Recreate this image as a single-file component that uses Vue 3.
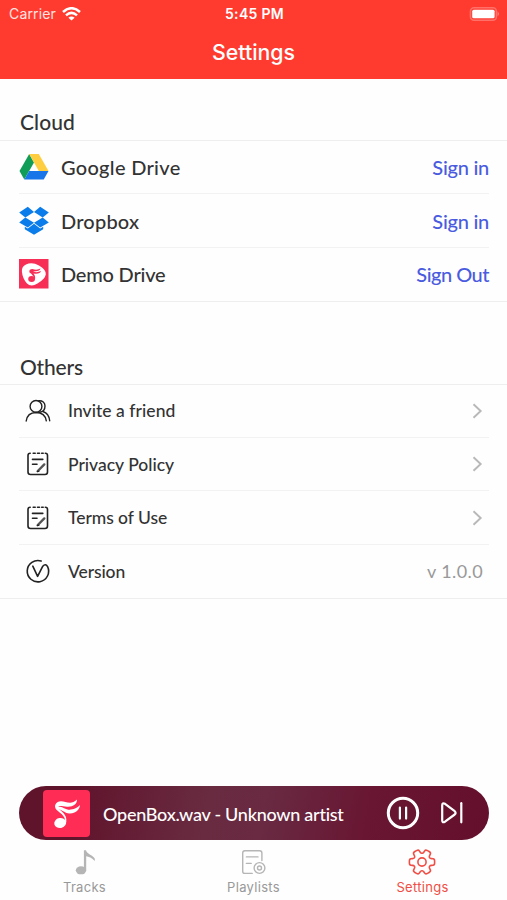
<script setup>
    import { ref, computed } from 'vue';

    const drives = ref([
        { id: 'google', name: 'Google Drive', action: 'Sign in', spacing: 0.3, actionSpacing: -0.25 },
        { id: 'dropbox', name: 'Dropbox', action: 'Sign in', spacing: 0.2, actionSpacing: -0.25 },
        { id: 'demo', name: 'Demo Drive', action: 'Sign Out', spacing: -0.2, actionSpacing: -0.5 }
    ])

    const others = ref([
        { id: 'invite', name: 'Invite a friend', icon: 'friend', spacing: 0.05 },
        { id: 'privacy', name: 'Privacy Policy', icon: 'doc', spacing: 0 },
        { id: 'terms', name: 'Terms of Use', icon: 'doc', spacing: -0.05 },
        { id: 'version', name: 'Version', icon: 'version', spacing: -0.1, value: 'v 1.0.0' }
    ])

    const tabs = ref(['Tracks', 'Playlists', 'Settings'])
    const active = ref('Settings')

    // six rounded teeth around the centre
    const gear = computed(() => {
        const pts = []
        for (let k = 0; k < 6; k++) {
            const shape = [[-23, 8.8], [-14, 13], [14, 13], [23, 8.8]]
            shape.forEach(([deg, r]) => {
                const a = (k * 60 + deg) * Math.PI / 180
                pts.push([14 + r * Math.cos(a), 14 + r * Math.sin(a)])
            })
        }
        const mix = (a, b, t) => [a[0] + (b[0] - a[0]) * t, a[1] + (b[1] - a[1]) * t]
        let d = ''
        pts.forEach((p, i) => {
            const prev = pts[(i + pts.length - 1) % pts.length]
            const next = pts[(i + 1) % pts.length]
            const a = mix(p, prev, 0.35)
            const b = mix(p, next, 0.35)
            d += (i ? 'L' : 'M') + a[0].toFixed(2) + ' ' + a[1].toFixed(2)
            d += 'Q' + p[0].toFixed(2) + ' ' + p[1].toFixed(2) + ' ' + b[0].toFixed(2) + ' ' + b[1].toFixed(2)
        })
        return d + 'Z'
    })
</script>
<template>
    <div class="screen">
        <header>
            <div class="status">
                <div class="carrier">
                    <span>Carrier</span>
                    <svg width="19" height="14" viewBox="0 0 19 14" fill="none" stroke="#fff" stroke-width="2.5">
                        <path d="M1 5Q9.5-2.6 18 5" />
                        <path d="M4 8.4Q9.5 3.4 15 8.4" />
                        <path d="M9.5 13.6L6.4 10.8Q9.5 8 12.6 10.8Z" fill="#fff" stroke="none" />
                    </svg>
                </div>
                <div class="clock">5:45 PM</div>
                <svg class="battery" width="31" height="14" viewBox="0 0 31 14">
                    <rect x="1.5" y=".8" width="25.9" height="12.4" rx="3.5" fill="none" stroke="#ff7068" stroke-width="1.6" />
                    <rect x="3.2" y="2.7" width="22.4" height="8.6" rx="1.6" fill="#fff" />
                    <path d="M28.7 4.6Q31 7 28.7 9.2Z" fill="#ff8f87" />
                </svg>
            </div>
            <h1>Settings</h1>
        </header>

        <main>
            <h2 class="cloud">Cloud</h2>
            <ul>
                <li v-for="item in drives" :key="item.id" class="drive">
                    <svg v-if="item.id == 'google'" width="30" height="30" viewBox="0 0 30 30">
                        <path d="M10.2 2L.5 19L5.3 27.5L15 10.5Z" fill="#0f9d58" />
                        <path d="M10.2 2H19.8L29.5 19H19.8Z" fill="#ffcd40" />
                        <path d="M10.2 19H29.5L24.7 27.5H5.3Z" fill="#1976e8" />
                    </svg>
                    <svg v-else-if="item.id == 'dropbox'" width="30" height="30" viewBox="0 0 30 30" fill="#0a7dea">
                        <path d="M8.8 .8L15 6L6.3 11.4L.2 6.5Z" />
                        <path d="M21.2 .8L15 6L23.7 11.4L29.8 6.5Z" />
                        <path d="M6.3 11.4L15 16.8L8.8 21.6L.2 16.4Z" />
                        <path d="M23.7 11.4L15 16.8L21.2 21.6L29.8 16.4Z" />
                        <path d="M15 17.7L21.2 22.6L24.2 20.8V23.2L15 28.8L5.8 23.2V20.8L8.8 22.6Z" />
                    </svg>
                    <svg v-else width="30" height="30" viewBox="0 0 30 30">
                        <rect x="0" y="0" width="29.5" height="29.5" fill="#f72f57" />
                        <path d="M7 5.5Q13 2.5 20 6.5Q27.5 11 26.8 15.5Q26 20 18.5 24.5Q12 28.5 8 24.5Q3.5 19.5 2.9 12.5Q2.5 7.5 7 5.5Z" fill="#fff" />
                        <ellipse cx="12.6" cy="20" rx="3.4" ry="2.9" fill="#f72f57" />
                        <path d="M15.3 20Q14.5 16 10.5 13.5Q9.5 10 13.5 10Q18 11.5 21.5 9.5Q21 12.5 14 12.5Q18 14 22 12Q21 15.5 14.5 14.5Q17 17.5 15.8 21Z" fill="#f72f57" />
                    </svg>
                    <span class="name" :style="{ letterSpacing: item.spacing + 'px' }">{{ item.name }}</span>
                    <a :style="{ letterSpacing: item.actionSpacing + 'px' }">{{ item.action }}</a>
                </li>
            </ul>

            <h2 class="other">Others</h2>
            <ul>
                <li v-for="item in others" :key="item.id" class="option">
                    <svg v-if="item.icon == 'friend'" width="26" height="26" viewBox="0 0 26 26" fill="none" stroke="#222" stroke-width="1.4" stroke-linecap="round">
                        <circle cx="11" cy="8.4" r="5.9" />
                        <path d="M13.8 2.8C17.5 2.5 20 4.8 20 8C20 11.8 17.6 14 14.5 14.3" />
                        <path d="M1.2 23C2 17.4 5.5 14.6 11 14.5C16.8 14.6 20.5 17.6 21.3 22.8" />
                        <path d="M18 13.5C22 14.8 24.3 18.3 24.7 22.8" />
                    </svg>
                    <svg v-else-if="item.icon == 'doc'" width="26" height="26" viewBox="0 0 26 26" fill="none" stroke="#222" stroke-width="1.6" stroke-linecap="round">
                        <path d="M5.2 2.2Q3 2.2 3 4.4V21Q3 23.5 5.5 23.5H20Q22.5 23.5 22.5 21V4.4Q22.5 2.2 20.3 2.2" />
                        <path d="M8.2 2.2H10.2M12.5 2.2H14.5M16.7 2.2H18.2M7.5 8.4H17.8M7.5 13.3H12" />
                        <path d="M12.8 20L19.3 13.4" stroke="#555" stroke-width="2.4" />
                        <path d="M12.2 20.6L14 20.1" stroke-width="1.2" />
                    </svg>
                    <svg v-else width="26" height="26" viewBox="0 0 26 26" fill="none" stroke="#222" stroke-width="1.6" stroke-linecap="round" stroke-linejoin="round">
                        <path d="M16.2 3A10.7 10.7 0 1 0 22.6 8.6Q20.5 5.2 17.8 8.2L12.6 18.4L7.8 8.2" />
                    </svg>
                    <span class="name" :style="{ letterSpacing: item.spacing + 'px' }">{{ item.name }}</span>
                    <span v-if="item.value" class="value">{{ item.value }}</span>
                    <svg v-else width="12" height="18" viewBox="0 0 12 18" fill="none" stroke="#b8b8b8" stroke-width="1.9">
                        <path d="M2.5 2.2L9.7 9L2.5 15.8" />
                    </svg>
                </li>
            </ul>
        </main>

        <footer>
            <div class="player">
                <div class="cover">
                    <svg width="47" height="47" viewBox="0 0 47 47" fill="#fff">
                        <ellipse cx="17.2" cy="33" rx="6" ry="5" transform="rotate(-12 17.2 33)" />
                        <path d="M21.8 34C23.7 27 18.5 24 13.7 20C10 16 13 11.3 18 11.2C22.5 11.1 28 15.5 34 9.6C34.2 14.3 29.6 17.2 24 16.7C20 16.3 17 15.4 15.2 16.4C20 16.5 23 20.2 28 19.6C32 19.2 34.5 17.5 37 15C36.6 20 32 24 26.2 23.5C22.5 23.2 19 20 15.7 18.9C20.3 22.2 25.2 26.3 22.8 34Z" />
                    </svg>
                </div>
                <div class="song">OpenBox.wav - Unknown artist</div>
                <svg class="pause" width="34" height="34" viewBox="0 0 34 34" fill="none" stroke="#fff">
                    <circle cx="17" cy="17" r="14.7" stroke-width="3" />
                    <path d="M13.9 11.6V22.6M20.1 11.6V22.6" stroke-width="2.2" stroke-linecap="round" />
                </svg>
                <svg width="24" height="24" viewBox="0 0 24 24" fill="none" stroke="#fff" stroke-width="2.2" stroke-linejoin="round" stroke-linecap="round">
                    <path d="M2.2 4.4Q2.2 1.4 5 2.8L14.7 10.2Q16.5 12 14.7 13.5L5 20.7Q2.2 22.3 2.2 19.3Z" />
                    <path d="M21.3 2.2V21.3" />
                </svg>
            </div>
            <nav>
                <div v-for="tab in tabs" :key="tab" class="tab" :class="{ active: tab == active }" @click="active = tab">
                    <svg v-if="tab == 'Tracks'" width="28" height="28" viewBox="0 0 28 28">
                        <ellipse cx="11" cy="22.3" rx="5.2" ry="4" fill="currentColor" />
                        <path d="M13.9 22V2.3H16C16.9 6.5 23.3 7 24.8 10.8V13C21.9 9.6 18.7 8.7 16.2 8.2V22Z" fill="currentColor" />
                    </svg>
                    <svg v-else-if="tab == 'Playlists'" width="28" height="28" viewBox="0 0 28 28" fill="none" stroke="currentColor" stroke-width="1.4" stroke-linecap="round">
                        <path d="M13.2 25.4H5.9Q3.7 25.4 3.7 23.2V5Q3.7 2.8 5.9 2.8H20.7Q22.9 2.8 22.9 5V12.5" />
                        <path d="M7.4 8.9H19M7.4 15.4H12.2" />
                        <circle cx="20.5" cy="20" r="5.4" />
                        <circle cx="20.5" cy="20" r="2" />
                    </svg>
                    <svg v-else width="28" height="28" viewBox="0 0 28 28" fill="none" stroke="currentColor" stroke-width="1.6">
                        <path :d="gear" />
                        <circle cx="14" cy="14" r="4.1" />
                    </svg>
                    <span>{{ tab }}</span>
                </div>
            </nav>
        </footer>
    </div>
</template>
<style>
    body{
        margin: 0;
        background-color: #fff;
    }
</style>
<style scoped>
    .screen{
        display: flex;
        flex-direction: column;
        width: 507px;
        height: 900px;
        overflow: hidden;
        background-color: #fefefe;
        font-family: Lato, "Liberation Sans", sans-serif;
        color: #333;
    }
    header{
        box-sizing: border-box;
        height: 79px;
        background-color: #ff3b30;
        color: #fff;
        font-family: Inter, "Liberation Sans", sans-serif;
    }
    .status{
        display: grid;
        grid-template-columns: 1fr auto 1fr;
        align-items: center;
        height: 27px;
        padding: 0 7px 0 9px;
        font-size: 14px;
    }
    .carrier{
        display: flex;
        align-items: center;
        gap: 6px;
        color: #ffe3e1;
        letter-spacing: .15px;
    }
    .clock{
        font-weight: 600;
        font-size: 14px;
        letter-spacing: .3px;
    }
    .battery{
        justify-self: end;
    }
    h1{
        margin: 11px 0 0;
        font-size: 21.3px;
        line-height: 28px;
        font-weight: 500;
        text-align: center;
    }
    main{
        flex: 1;
    }
    h2{
        margin: 0;
        padding-left: 20px;
        font-size: 21px;
        line-height: 26px;
        font-weight: 500;
    }
    .cloud{
        padding-top: 30px;
        padding-bottom: 5px;
        letter-spacing: .1px;
    }
    .other{
        padding-top: 52px;
        padding-bottom: 4px;
        letter-spacing: -.2px;
    }
    ul{
        list-style: none;
        margin: 0;
        padding: 0 18px 0 19px;
        border-top: 1px solid #eee;
        border-bottom: 1px solid #eee;
    }
    li{
        display: flex;
        align-items: center;
        box-sizing: border-box;
        height: 53.4px;
        border-bottom: 1px solid #f2f2f2;
    }
    li:last-child{
        height: 52.8px;
        border-bottom: none;
    }
    .drive .name{
        flex: 1;
        margin-left: 12px;
        font-size: 20px;
        font-weight: 500;
    }
    .drive a{
        font-size: 20px;
        font-weight: 500;
        color: #4a5be0;
    }
    .option{
        padding: 0 6px;
    }
    .option .name{
        flex: 1;
        margin-left: 17px;
        font-size: 17.5px;
        font-weight: 500;
    }
    .option .value{
        font-size: 18px;
        letter-spacing: .4px;
        color: #999;
    }
    .player{
        display: flex;
        align-items: center;
        box-sizing: border-box;
        height: 54px;
        margin: 0 18px 0 19px;
        padding: 0 25px 0 24px;
        border-radius: 27px;
        background: linear-gradient(100deg, #60142c 12%, #692b40 40%, #692a42 52%, #691632 74%, #64102c);
        color: #fff;
    }
    .cover{
        width: 47px;
        height: 47px;
        border-radius: 4px;
        background-color: #ff2d55;
    }
    .song{
        flex: 1;
        margin-left: 13px;
        padding-top: 2px;
        font-size: 18px;
        font-weight: 500;
        letter-spacing: -.26px;
        white-space: nowrap;
    }
    .pause{
        margin-right: 20px;
    }
    nav{
        display: flex;
        height: 60px;
    }
    .tab{
        flex: 1;
        display: flex;
        flex-direction: column;
        align-items: center;
        padding-top: 8px;
        color: #b5b5b5;
        font-family: Inter, "Liberation Sans", sans-serif;
        font-size: 13px;
        line-height: 16px;
        letter-spacing: .3px;
        cursor: pointer;
    }
    .tab span{
        margin-top: 3px;
        color: #999;
    }
    .tab svg{
        margin-right: 1px;
    }
    .active, .active span{
        color: #f04e45;
    }
</style>
